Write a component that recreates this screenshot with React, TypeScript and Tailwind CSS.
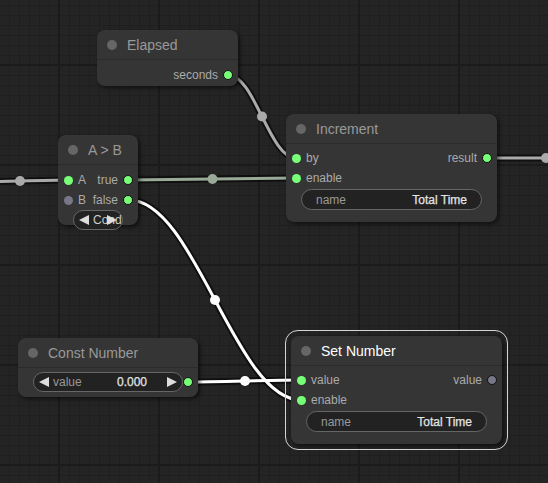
import React from "react";

type Pt = [number, number];

function bez(a: Pt, b: Pt) {
  const d = Math.hypot(b[0] - a[0], b[1] - a[1]) * 0.25;
  const c1: Pt = [a[0] + d, a[1]];
  const c2: Pt = [b[0] - d, b[1]];
  const path = `M${a[0]} ${a[1]} C${c1[0]} ${c1[1]} ${c2[0]} ${c2[1]} ${b[0]} ${b[1]}`;
  const mx = (a[0] + 3 * c1[0] + 3 * c2[0] + b[0]) / 8;
  const my = (a[1] + 3 * c1[1] + 3 * c2[1] + b[1]) / 8;
  return { path, mx, my };
}

const links: { a: Pt; b: Pt; color: string }[] = [
  { a: [-28, 182], b: [68, 180], color: "#AAAAAA" },
  { a: [228, 75], b: [296, 158], color: "#AAAAAA" },
  { a: [129, 180], b: [296, 178], color: "#99AA99" },
  { a: [487, 158], b: [605, 158], color: "#AAAAAA" },
  { a: [129, 200], b: [301, 400], color: "#FFFFFF" },
  { a: [189, 382], b: [301, 380], color: "#FFFFFF" },
];

function Links() {
  return (
    <svg className="absolute inset-0 w-full h-full" width={548} height={483}>
      {links.map((l, i) => {
        const { path } = bez(l.a, l.b);
        return (
          <path key={"b" + i} d={path} fill="none" stroke="rgba(0,0,0,0.55)" strokeWidth={7} />
        );
      })}
      {links.map((l, i) => {
        const { path, mx, my } = bez(l.a, l.b);
        return (
          <g key={"l" + i}>
            <path d={path} fill="none" stroke={l.color} strokeWidth={3} />
            <circle cx={mx} cy={my} r={5} fill={l.color} />
          </g>
        );
      })}
    </svg>
  );
}

function LeftTri() {
  return (
    <svg width={10} height={10} viewBox="0 0 10 10" className="shrink-0">
      <polygon points="10,0 0,5 10,10" fill="#DDDDDD" />
    </svg>
  );
}
function RightTri() {
  return (
    <svg width={10} height={10} viewBox="0 0 10 10" className="shrink-0">
      <polygon points="0,0 10,5 0,10" fill="#DDDDDD" />
    </svg>
  );
}

function Title({ text, selected }: { text: string; selected?: boolean }) {
  return (
    <div className="h-[30px] flex items-center pl-[10px] border-b border-[#2b2b2b] shrink-0">
      <div className="w-[10px] h-[10px] rounded-full bg-[#666666] shrink-0" />
      <span
        className={
          selected
            ? "ml-[10px] text-[14px] text-white whitespace-nowrap leading-none"
            : "ml-[10px] text-[14px] text-[#999999] whitespace-nowrap leading-none"
        }
      >
        {text}
      </span>
    </div>
  );
}

function InDot({ on }: { on: boolean }) {
  return (
    <div
      className={
        on
          ? "w-[9px] h-[9px] rounded-full bg-[#77ff77] shrink-0"
          : "w-[9px] h-[9px] rounded-full bg-[#777788] shrink-0"
      }
    />
  );
}
function OutDot({ on }: { on: boolean }) {
  return (
    <div
      className={
        on
          ? "w-[10px] h-[10px] rounded-full bg-[#77ff77] border border-[#111] shrink-0"
          : "w-[10px] h-[10px] rounded-full bg-[#777788] border border-[#111] shrink-0"
      }
    />
  );
}

function Row({
  inLabel,
  inOn,
  outLabel,
  outOn,
}: {
  inLabel?: string;
  inOn?: boolean;
  outLabel?: string;
  outOn?: boolean;
}) {
  return (
    <div className="h-[20px] flex items-center justify-between text-[12px] text-[#AAAAAA] leading-none">
      <div className="flex items-center pl-[6px]">
        {inLabel !== undefined && (
          <>
            <InDot on={!!inOn} />
            <span className="ml-[5px] whitespace-nowrap">{inLabel}</span>
          </>
        )}
      </div>
      <div className="flex items-center pr-[5px]">
        {outLabel !== undefined && (
          <>
            <span className="mr-[5px] whitespace-nowrap">{outLabel}</span>
            <OutDot on={!!outOn} />
          </>
        )}
      </div>
    </div>
  );
}

function TextWidget() {
  return (
    <div className="mx-[15px] h-[21px] rounded-full bg-[#222222] border border-[#666666] flex items-center justify-between px-[14px] text-[12px] leading-none">
      <span className="text-[#999999]">name</span>
      <span className="text-[#E4E4E4] [-webkit-text-stroke:0.25px_#E4E4E4]">Total Time</span>
    </div>
  );
}

const nodeBase = "absolute bg-[#353535] rounded-[8px] shadow-[2px_2px_4px_rgba(0,0,0,0.55)] flex flex-col";

export default function App() {
  return (
    <div className="relative w-[548px] h-[483px] overflow-hidden bg-[#242424] [font-family:'Liberation_Sans',Arial,sans-serif] bg-[linear-gradient(to_right,#1b1b1b_2px,transparent_2px),linear-gradient(to_bottom,#1b1b1b_2px,transparent_2px),linear-gradient(to_right,#1f1f1f_1px,transparent_1px),linear-gradient(to_bottom,#1f1f1f_1px,transparent_1px)] bg-[size:100px_100px,100px_100px,10px_10px,10px_10px] bg-[position:58px_64px,58px_64px,9px_5px,9px_5px]">
      <Links />

      {/* Elapsed */}
      <div className={nodeBase + " left-[97px] top-[30px] w-[141px] h-[56px]"}>
        <Title text="Elapsed" />
        <div className="pt-[5px]">
          <Row outLabel="seconds" outOn />
        </div>
      </div>

      {/* Increment */}
      <div className={nodeBase + " left-[286px] top-[114px] w-[211px] h-[108px]"}>
        <Title text="Increment" />
        <div className="pt-[4px]">
          <Row inLabel="by" inOn outLabel="result" outOn />
          <Row inLabel="enable" inOn />
          <div className="mt-[1px]">
            <TextWidget />
          </div>
        </div>
      </div>

      {/* A > B */}
      <div className={nodeBase + " left-[58px] top-[135px] w-[80px] h-[90px]"}>
        <Title text="A > B" />
        <div className="pt-[5px]">
          <Row inLabel="A" inOn outLabel="true" outOn />
          <Row inLabel="B" inOn={false} outLabel="false" outOn />
          <div className="mx-[15px] h-[20px] rounded-full bg-[#222222] border border-[#666666] relative flex items-center pl-[5px] text-[12px] leading-none">
            <LeftTri />
            <span className="ml-[4px] text-[#CCCCCC] whitespace-nowrap">Cond</span>
            <div className="absolute right-[5px] top-[4px]">
              <RightTri />
            </div>
          </div>
        </div>
      </div>

      {/* Const Number */}
      <div className={nodeBase + " left-[18px] top-[338px] w-[180px] h-[59px]"}>
        <Title text="Const Number" />
        <div className="pt-[4px] relative">
          <div className="mx-[15px] h-[20px] rounded-full bg-[#222222] border border-[#666666] flex items-center px-[5px] text-[12px] leading-none">
            <LeftTri />
            <span className="ml-[4px] text-[#999999]">value</span>
            <span className="ml-auto mr-[20px] text-[#E4E4E4] [-webkit-text-stroke:0.25px_#E4E4E4]">0.000</span>
            <RightTri />
          </div>
          <div className="absolute right-[5px] top-[9px]">
            <OutDot on />
          </div>
        </div>
      </div>

      {/* Set Number (selected) */}
      <div className={nodeBase + " left-[291px] top-[336px] w-[211px] h-[108px]"}>
        <div className="absolute -inset-[6px] rounded-[13px] border-[1.5px] border-[#d4d4d4] pointer-events-none" />
        <Title text="Set Number" selected />
        <div className="pt-[4px]">
          <Row inLabel="value" inOn outLabel="value" outOn={false} />
          <Row inLabel="enable" inOn />
          <div className="mt-[1px]">
            <TextWidget />
          </div>
        </div>
      </div>
    </div>
  );
}
